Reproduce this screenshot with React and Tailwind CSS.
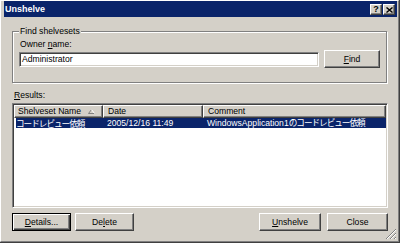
const raised =
  'border border-t-white border-l-white border-r-[#404040] border-b-[#404040] shadow-[inset_-1px_-1px_0_#808080]'
const sunken =
  'border border-t-[#808080] border-l-[#808080] border-r-white border-b-white shadow-[inset_1px_1px_0_#404040,inset_-1px_-1px_0_#d4d0c8]'

function Button({ children, className = '', isDefault = false }) {
  const frame = isDefault
    ? 'border border-black shadow-[inset_1px_1px_0_#fff,inset_-1px_-1px_0_#404040,inset_-2px_-2px_0_#808080]'
    : raised
  return (
    <div className={`h-[18px] flex items-center justify-center bg-[#d4d0c8] ${frame} ${className}`}>
      {children}
    </div>
  )
}

function CaptionButton({ children }) {
  return (
    <div className={`w-[12px] h-[11px] bg-[#d4d0c8] flex items-center justify-center ${raised}`}>
      {children}
    </div>
  )
}

const jp = 'font-["Noto_Sans_CJK_JP",sans-serif] tracking-[-1px]'

export default function App() {
  return (
    <div className="w-[400px] h-[243px] bg-[#d4d0c8] border-r border-b border-[#404040] font-['Liberation_Sans',Arial,sans-serif] text-[8.6px] text-black leading-none overflow-hidden">
      <div className="relative h-full border-r border-b border-[#808080] border-t border-l border-t-white border-l-white pl-[3px] pr-[1px] flex flex-col">
        {/* title bar */}
        <div className="h-[16px] bg-[#0a246a] flex items-center pl-[1px] pr-[2px] shrink-0">
          <span className="text-white font-bold text-[9px]">Unshelve</span>
          <div className="ml-auto flex gap-[1px] mt-[1px]">
            <CaptionButton>
              <span className="font-bold text-[9px] leading-none">?</span>
            </CaptionButton>
            <CaptionButton>
              <svg width="7" height="6" viewBox="0 0 7 6">
                <path d="M0.5 0.5 L6.5 5.5 M6.5 0.5 L0.5 5.5" stroke="#000" strokeWidth="1.4" />
              </svg>
            </CaptionButton>
          </div>
        </div>

        {/* body */}
        <div className="flex-1 flex flex-col pl-[8px] pr-[9px] pt-[14px]">
          <div className="relative mr-[1px] border border-[#808080] shadow-[inset_1px_1px_0_#fff,1px_1px_0_#fff] pl-[6px] pt-[7px] pb-[14px]">
            <span className="absolute -top-[6px] left-[6px] bg-[#d4d0c8] px-[1px] leading-[11px]">
              Find shelvesets
            </span>
            <div className="ml-[1px] leading-[11px]">
              Owner <span className="underline">n</span>ame:
            </div>
            <div className="flex items-center gap-[5px]">
              <div className={`w-[300px] h-[15px] bg-white flex items-center pl-[2px] ${sunken}`}>
                Administrator
              </div>
              <Button className="w-[56px]">
                <span className="underline">F</span>ind
              </Button>
            </div>
          </div>

          <div className="mt-[6px] ml-[2px] leading-[12px]">
            <span className="underline">R</span>esults:
          </div>

          <div className={`mt-[2px] h-[105px] bg-white ${sunken} p-[1px] flex flex-col`}>
            <div className="flex h-[13px] shrink-0">
              <div className={`w-[89px] flex items-center pl-[3px] ${raised} bg-[#d4d0c8]`}>
                Shelveset Name
                <svg className="ml-[7px]" width="7" height="5" viewBox="0 0 7 5">
                  <path d="M3.5 0.5 L0.5 4.5 L6.5 4.5" fill="none" stroke="#808080" />
                  <path d="M6.5 4.5 L3.5 0.5" fill="none" stroke="#fff" />
                </svg>
              </div>
              <div className={`w-[100px] flex items-center pl-[4px] ${raised} bg-[#d4d0c8]`}>Date</div>
              <div className={`flex-1 flex items-center pl-[4px] ${raised} bg-[#d4d0c8]`}>Comment</div>
            </div>
            <div className="flex h-[10px] bg-[#0a246a] text-white ml-[2px] items-center">
              <div className={`w-[87px] ${jp}`}>コードレビュー依頼</div>
              <div className="w-[100px] pl-[4px]">2005/12/16 11:49</div>
              <div className="flex-1 pl-[4px] whitespace-nowrap">
                WindowsApplication1<span className={jp}>のコードレビュー依頼</span>
              </div>
            </div>
          </div>

          <div className="mt-[5px] flex gap-[4px]">
            <Button isDefault className="w-[59px]">
              <span className="underline">D</span>etails...
            </Button>
            <Button className="w-[59px]">
              De<span className="underline">l</span>ete
            </Button>
            <Button className="w-[62px] ml-auto">
              <span className="underline">U</span>nshelve
            </Button>
            <Button className="w-[61px] ml-[2px]">Close</Button>
          </div>
        </div>

        {/* size grip */}
        <svg className="absolute right-[1px] bottom-[1px]" width="12" height="12" viewBox="0 0 12 12">
          <path d="M11 1 L1 11 M11 5 L5 11 M11 9 L9 11" stroke="#808080" strokeWidth="1" />
          <path d="M11 2 L2 11 M11 6 L6 11 M11 10 L10 11" stroke="#fff" strokeWidth="1" />
        </svg>
      </div>
    </div>
  )
}
